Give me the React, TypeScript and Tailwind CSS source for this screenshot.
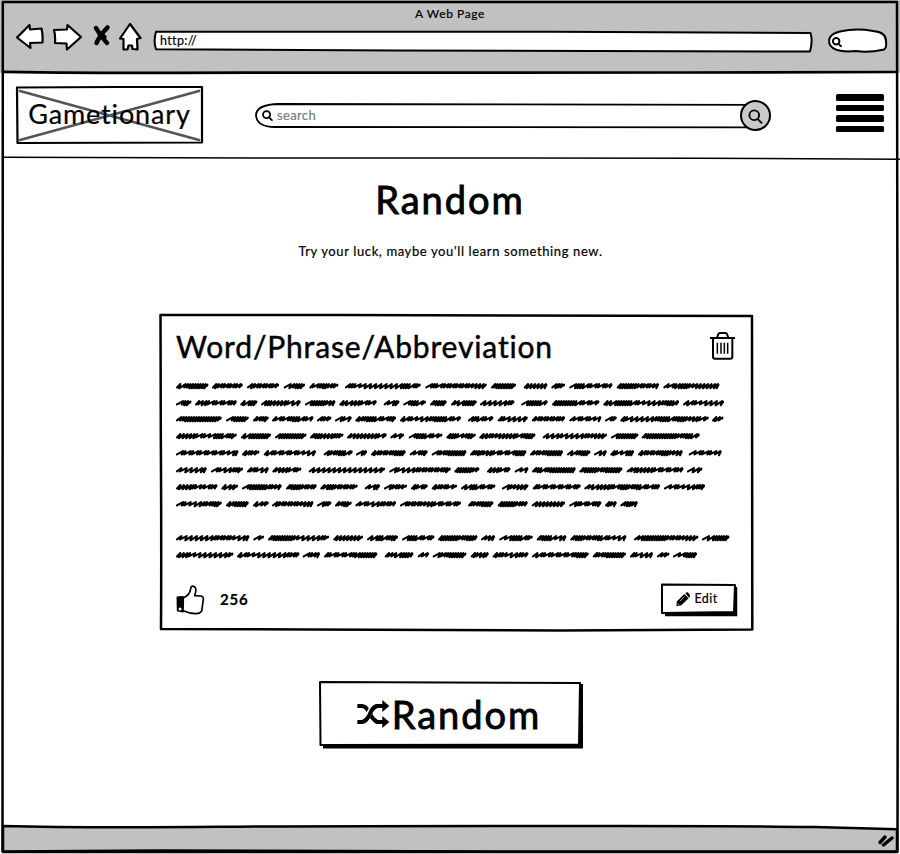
import React from "react";

const FONT = "font-['Lato','Noto_Sans',sans-serif]";

/* Word extents of the scribbled copy, three units to a pixel. */
const LINES: { y: number; words: number[][] }[] = [
  { y: 0, words: [[50,145],[158,248],[263,357],[373,435],[450,535],[557,782],[798,980],[995,1068],[1093,1162],[1176,1215],[1230,1357],[1372,1497],[1512,1678]] },
  { y: 17, words: [[50,94],[107,230],[243,292],[305,422],[437,526],[540,650],[673,718],[732,798],[812,860],[875,950],[962,1063],[1086,1163],[1178,1318],[1332,1557],[1571,1692]] },
  { y: 33, words: [[50,185],[200,266],[281,326],[338,460],[473,514],[527,575],[588,708],[722,903],[926,1000],[1015,1103],[1117,1215],[1230,1324],[1337,1370],[1383,1646],[1658,1690]] },
  { y: 50, words: [[50,230],[245,333],[347,439],[452,550],[563,680],[693,732],[748,847],[861,947],[960,1126],[1150,1341],[1355,1435],[1447,1619]] },
  { y: 67, words: [[50,235],[248,298],[313,468],[493,578],[590,621],[635,737],[751,803],[817,919],[932,1099],[1112,1209],[1223,1291],[1304,1340],[1353,1422],[1436,1568],[1588,1685]] },
  { y: 84, words: [[50,140],[155,249],[263,326],[339,424],[448,675],[690,872],[885,958],[983,1051],[1066,1105],[1118,1247],[1260,1387],[1402,1570],[1583,1627]] },
  { y: 101, words: [[50,172],[186,234],[248,365],[380,470],[483,593],[616,660],[674,741],[755,803],[817,891],[905,1006],[1028,1105],[1120,1262],[1275,1500],[1514,1635]] },
  { y: 118, words: [[50,185],[200,266],[281,326],[338,460],[473,514],[527,575],[588,708],[722,903],[926,1000],[1015,1103],[1117,1215],[1230,1324],[1337,1370],[1383,1433]] },
  { y: 152, words: [[50,268],[282,312],[326,507],[522,609],[623,714],[728,823],[836,952],[965,1005],[1020,1118],[1132,1219],[1233,1399],[1424,1615],[1628,1708]] },
  { y: 169, words: [[50,220],[233,418],[430,480],[494,652],[676,760],[775,807],[820,919],[934,986],[1000,1105],[1118,1286],[1300,1398],[1412,1479],[1493,1528],[1541,1611]] },
];

function scribble(from: number, to: number, y: number, seed: number) {
  const end = (to - 50) / 3;
  const c = y + 7;
  let s = seed * 7919 + 17;
  let x = (from - 50) / 3 + 1;
  let d = `M${x.toFixed(1)} ${c + 1.4}`;
  while (x < end - 4) {
    s = (s * 1103515245 + 12345) % 2147483648;
    const r = (s >> 8) % 8;
    const step = r < 2 ? 5.2 : r < 4 ? 3.6 : 2.5;
    const drop = r % 2 === 0 ? 2.3 : 1.4;
    const next = Math.min(x + step, end - 1.5);
    d += `L${(next + 0.8).toFixed(1)} ${c - 1.9}L${(next - 0.5).toFixed(1)} ${(c + drop).toFixed(1)}`;
    x = next;
  }
  d += `L${(end - 0.3).toFixed(1)} ${c - 1.4}L${(end - 0.6).toFixed(1)} ${c - 0.4}`;
  return d;
}

function Scribbles() {
  return (
    <svg className="block h-[184px] w-[556px] shrink-0" viewBox="0 0 556 184" fill="none" stroke="#000" strokeWidth="2.1" strokeLinecap="round" strokeLinejoin="round">
      {LINES.map((l, i) => l.words.map((w, j) => <path key={`${i}-${j}`} d={scribble(w[0], w[1], l.y, i * 31 + j + 3)} />))}
    </svg>
  );
}

function Outline({ w, h, children }: { w: number; h: number; children: React.ReactNode }) {
  return (
    <svg className="pointer-events-none absolute inset-0 overflow-visible" width={w} height={h} viewBox={`0 0 ${w} ${h}`} fill="none" stroke="#000" strokeWidth="2" strokeLinejoin="round" strokeLinecap="round">
      {children}
    </svg>
  );
}

function Magnifier({ className, width = 2 }: { className: string; width?: number }) {
  return (
    <svg className={className} viewBox="0 0 12 12" fill="none" stroke="#000" strokeWidth={width} strokeLinecap="round">
      <circle cx="5" cy="5" r="3.9" />
      <path d="M7.6 7.9 10.8 11.1" />
    </svg>
  );
}

function BrowserBar() {
  return (
    <header className="relative flex h-[73px] w-full shrink-0 flex-col bg-[#c1c1c1]">
      <div className="h-[23px] pt-[5px] text-center text-[12px] leading-[17px] tracking-[0.6px]">A Web Page</div>
      <div className="flex h-[29px] items-start pl-4">
        <svg className="h-[28px] w-[128px] shrink-0" viewBox="0 0 128 28" fill="#fff" stroke="#000" strokeWidth="2.2" strokeLinejoin="round" strokeLinecap="round">
          <path d="M1 14.5 13.500 2 14 6.5 25.500 5.500Q27 12 26.500 19.500L14 20 14.5 25Z" />
          <path d="M38 7 51 6.5 51.5 2 65 14 51 26.500 50.5 20.5 39 20Q39.500 12 38 7Z" />
          <path d="M80 5Q85 14 91 20M91.500 4.500Q84 12 80.500 20" strokeWidth="4.500" />
          <path d="M84 11 88 14" strokeWidth="5" />
          <path d="M104 15.500 114 1 124.500 15 121 16 121.500 26.500 116.500 26 116 22.500 112.500 22.500 111.500 26.500 107.500 26.500 107.500 16Z" />
        </svg>
        <div className="relative ml-[10px] mt-[8px] h-[20px] w-[658px] pl-[6px] text-[12.500px] leading-[19px] tracking-[0.350px]">
          <Outline w={658} h={20}>
            <path fill="#fff" d="M2 .8 Q-.8 10 2 18.300 Q90 18.800 240 19.500 L656 20.500 Q659 10 656.500 2 Q560 1.800 400 .8 Z" />
          </Outline>
          <span className="relative">http://</span>
        </div>
        <div className="relative ml-[16px] mt-[6px] h-[23px] w-[59px] pl-[4px] pt-[8px]">
          <Outline w={59} h={23}>
            <path fill="#fff" d="M12 2.500 Q28-1 45 2 Q58 3 58 12 Q59 19 56 20.500 Q40 24 28 22 Q7 24 2 16 Q-2 6 12 2.500Z" />
          </Outline>
          <Magnifier className="relative block h-[10px] w-[10px]" width={2.3} />
        </div>
      </div>
      <Outline w={900} h={73}>
        <path d="M3 71.800 Q100 73.200 250 72.700 T690 72.500 L897 72" strokeWidth="2.700" />
      </Outline>
    </header>
  );
}

function SiteHeader() {
  return (
    <section className="relative flex h-[85px] shrink-0 items-start">
      <div className="relative ml-4 mt-[13px] flex h-[58px] w-[187px] items-center justify-center pb-[3px]">
        <Outline w={187} h={58}>
          <path d="M4 5 183 54M183 5 4 54" stroke="#555" strokeWidth="2.800" />
          <path d="M1 1.500 100 1 186 1 186 56.500 1.500 57Z" strokeWidth="2.200" />
        </Outline>
        <span className="relative text-[27px] leading-[32px] tracking-[0.850px]">Gametionary</span>
      </div>
      <div className="relative ml-[52px] mt-[30px] flex h-[25px] w-[500px] items-center pl-[7px] pb-[2px]">
        <Outline w={500} h={25}>
          <path fill="#fff" strokeWidth="1.800" d="M500 1.800 Q300 .8 24 1 Q1 1.500 1 12.500 Q2 24 20 24 L500 24.300" />
        </Outline>
        <Magnifier className="relative mt-[2px] h-[11px] w-[11px]" width={1.9} />
        <span className="relative ml-1 text-[13px] leading-[16px] text-[#7c7c83] tracking-[0.350px]">search</span>
      </div>
      <div className="relative ml-[-15px] mt-[27px] flex h-[31px] w-[31px] items-center justify-center rounded-full border-[2.500px] border-black bg-[#c9c9c9]">
        <Magnifier className="mt-[1px] h-[15px] w-[15px]" width={1.5} />
      </div>
      <div className="ml-[65px] mt-[21px] flex h-[38px] w-[48px] flex-col justify-between">
        <i className="block h-[6.500px] rounded-[1.500px] bg-black" />
        <i className="block h-[6.500px] rounded-[1.500px] bg-black" />
        <i className="block h-[6.500px] rounded-[1.500px] bg-black" />
        <i className="block h-[6.500px] rounded-[1.500px] bg-black" />
      </div>
      <Outline w={900} h={85}>
        <path d="M3 84.300 Q80 84 300 85 L700 85.200 Q800 86 900 86.300" strokeWidth="1.500" />
      </Outline>
    </section>
  );
}

function TrashIcon() {
  return (
    <svg className="h-[28px] w-[25px]" viewBox="0 0 75 84" fill="none" stroke="#000" strokeWidth="6" strokeLinejoin="round">
      <path d="M0 18H75M21 18 25 6Q26 3 30 3H46Q50 3 51 6L55 18M9 18V74Q9 80 15 80H61Q67 80 67 74V18" />
      <path d="M22 32V65M33 32V65M43 32V65M53 32V65" strokeWidth="4.500" />
    </svg>
  );
}

function ThumbIcon() {
  return (
    <svg className="h-[30px] w-[29px]" viewBox="0 0 87 90" fill="none" stroke="#000" strokeWidth="5" strokeLinejoin="round">
      <path d="M4 37Q13 34 22 36L21 80 5 77Z" fill="#000" />
      <path d="M22 38C34 34 42 24 44 12C44 3 50 2 55 5C62 9 61 18 56 32L76 33Q83 35 82 43L77 79Q71 87 58 86Q40 85 22 77" />
      <circle cx="12" cy="72" r="4.500" fill="#fff" stroke="none" />
    </svg>
  );
}

function PencilIcon() {
  return (
    <svg className="h-[15px] w-[14px] shrink-0" viewBox="0 0 42 45">
      <path d="M1 43 3 28 25 6 38 19 16 40Z" />
      <path d="M28 4 32 1Q35 0 38 4L41 8Q43 12 41 15L39 17Z" />
      <path d="M12 27 25 14M4 35 9 40" stroke="#fff" strokeWidth="2" />
    </svg>
  );
}

function ShuffleIcon() {
  return (
    <svg className="h-[28px] w-[33px] shrink-0" viewBox="0 0 99 84">
      <path d="M1 18H14Q27 18 36 37T60 66H78M1 66H14Q27 66 38 43T61 18H78" fill="none" stroke="#000" strokeWidth="12" />
      <path d="M29 54 43 28" stroke="#fff" strokeWidth="17" />
      <path d="M20 64Q31 60 40 39T61 18" fill="none" stroke="#000" strokeWidth="12" />
      <path d="M76 0 97 18 76 36ZM76 48 97 66 76 84Z" />
    </svg>
  );
}

function EntryCard() {
  return (
    <article className="relative ml-[159px] mt-[52px] flex h-[318px] w-[595px] shrink-0 flex-col pl-[17px] pr-[18px]">
      <Outline w={595} h={318}>
        <path d="M1.500 2 180 2 593 3 Q592.500 180 593.300 316.500 L400 317.500 150 316.500 2 316 Q2.500 230 1.800 120Z" strokeWidth="2.500" />
      </Outline>
      <div className="relative flex h-[66px] items-center justify-between pr-[1px]">
        <h2 className="text-[30px] leading-[36px] tracking-[0.840px] [-webkit-text-stroke:0.450px_#000]">Word/Phrase/Abbreviation</h2>
        <TrashIcon />
      </div>
      <Scribbles />
      <div className="relative mt-[21px] flex items-center">
        <ThumbIcon />
        <span className="ml-[15px] text-[15px] font-bold tracking-[0.800px]">256</span>
        <button className="relative ml-auto flex h-[31px] w-[75px] items-center justify-center pb-[1px] text-[12.500px] tracking-[0.450px]">
          <Outline w={75} h={31}>
            <path d="M4 30.500 74.500 30.500 74.500 3" strokeWidth="3.500" strokeLinejoin="miter" strokeLinecap="butt" />
            <path d="M1 .5 74 1 73 28 1 29Z" fill="#fff" />
          </Outline>
          <span className="relative flex items-center gap-1 pr-[3px]"><PencilIcon />Edit</span>
        </button>
      </div>
    </article>
  );
}

function Page() {
  return (
    <main className="flex grow flex-col">
      <h1 className="mt-[18px] text-center text-[38px] leading-[46px] tracking-[2px] [-webkit-text-stroke:0.900px_#000]">Random</h1>
      <p className="mt-[19px] pl-[1px] text-center text-[13px] leading-[20px] tracking-[0.620px]">Try your luck, maybe you'll learn something new.</p>
      <EntryCard />
      <button className="relative ml-[319px] mt-[50px] flex h-[65px] w-[262px] shrink-0 items-center justify-center pr-[2px]">
        <Outline w={262} h={65}>
          <path d="M4 65.500 262 65.500 262 3" strokeWidth="4" strokeLinejoin="miter" strokeLinecap="butt" />
          <path d="M1 1 261 2 260 63.500 1.500 64Z" fill="#fff" />
        </Outline>
        <span className="relative flex items-center gap-0.5 text-[38px] leading-[46px] tracking-[2px] [-webkit-text-stroke:0.900px_#000]">
          <ShuffleIcon />Random
        </span>
      </button>
    </main>
  );
}

export default function App() {
  return (
    <div className={`relative flex h-[854px] w-[900px] flex-col overflow-hidden bg-white text-black [-webkit-text-stroke:0.200px] ${FONT}`}>
      <BrowserBar />
      <SiteHeader />
      <Page />
      <footer className="relative flex h-[28px] shrink-0 items-center justify-end pr-[5px]">
        <Outline w={900} h={28}>
          <path fill="#c1c1c1" strokeWidth="2.500" d="M3 0 Q80 2 220 .8 T620 0 Q760 0 815 1 L897 3.200V26H3Z" />
        </Outline>
        <svg className="relative h-[13px] w-[17px]" viewBox="0 0 17 13" fill="none" stroke="#000" strokeWidth="3.400" strokeLinecap="round">
          <path d="M2 8.500 7 3M5.500 11 14 4" />
        </svg>
      </footer>
      <Outline w={900} h={854}>
        <path d="M3 2 897 2Q898.500 300 897.800 600L897.500 851.500 500 851.500 160 850.500 2.500 851.500Q1 400 2.800 2Z" strokeWidth="2.500" />
      </Outline>
    </div>
  );
}
